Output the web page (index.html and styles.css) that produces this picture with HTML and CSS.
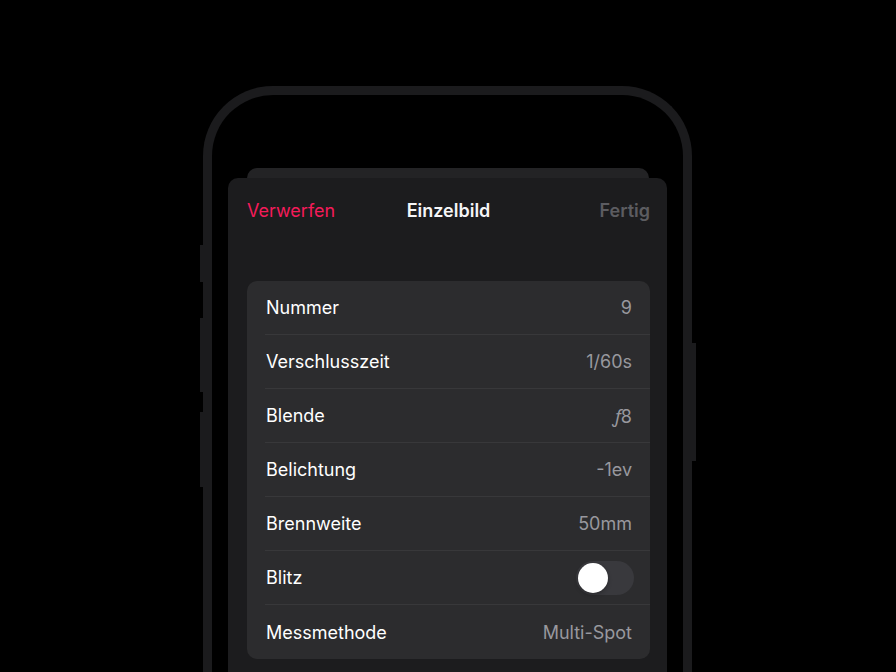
FILE: index.html
```html
<!DOCTYPE html>
<html lang="de">
<head>
<meta charset="utf-8">
<title>Einzelbild</title>
<link rel="stylesheet" href="styles.css">
</head>
<body>
<div class="phone">
  <span class="btn btn-l1"></span>
  <span class="btn btn-l2"></span>
  <span class="btn btn-l3"></span>
  <span class="btn btn-r1"></span>
  <div class="screen">
    <div class="sheet-back"></div>
    <div class="sheet">
      <div class="nav">
        <span class="nav-cancel">Verwerfen</span>
        <span class="nav-title">Einzelbild</span>
        <span class="nav-done">Fertig</span>
      </div>
      <div class="list">
        <div class="row"><span class="label">Nummer</span><span class="value">9</span></div>
        <div class="row"><span class="label">Verschlusszeit</span><span class="value">1/60s</span></div>
        <div class="row"><span class="label">Blende</span><span class="value"><span class="fnum">ƒ</span>8</span></div>
        <div class="row"><span class="label">Belichtung</span><span class="value">-1ev</span></div>
        <div class="row"><span class="label">Brennweite</span><span class="value">50mm</span></div>
        <div class="row"><span class="label">Blitz</span><span class="toggle"><span class="knob"></span></span></div>
        <div class="row"><span class="label">Messmethode</span><span class="value">Multi-Spot</span></div>
      </div>
    </div>
  </div>
</div>
</body>
</html>
```

FILE: styles.css
```css
html, body {
  margin: 0;
  padding: 0;
  background: #000;
  height: 672px;
  overflow: hidden;
}
body {
  font-family: Inter, "Noto Sans", sans-serif;
  -webkit-font-smoothing: antialiased;
}
.phone {
  position: relative;
  margin: 86px 0 0 203px;
  width: 471px;
  height: 577px;
  border: 9px solid #1b1b1d;
  border-bottom: none;
  border-radius: 70px 70px 0 0;
}
.btn {
  position: absolute;
  width: 3px;
  background: #1b1b1d;
}
.btn-l1 { left: -12px; top: 150px; height: 37px; }
.btn-l2 { left: -12px; top: 223px; height: 74px; }
.btn-l3 { left: -12px; top: 317px; height: 75px; }
.btn-r1 { right: -13px; top: 248px; height: 118px; width: 4px; }
.screen {
  display: flex;
  flex-direction: column;
  height: 100%;
  border-radius: 61px 61px 0 0;
  overflow: hidden;
}
.sheet-back {
  height: 20px;
  margin: 73px 34px -10px 35px;
  background: #232325;
  border-radius: 10px 10px 0 0;
  flex-shrink: 0;
}
.sheet {
  position: relative;
  flex: 1;
  margin: 0 16px;
  padding: 0 17px 0 19px;
  background: #1c1c1e;
  border-radius: 10px 10px 0 0;
}
.nav {
  display: grid;
  grid-template-columns: 1fr auto 1fr;
  align-items: center;
  height: 64px;
  font-size: 18px;
  margin-bottom: 39px;
}
.nav-cancel { color: #f51b5a; justify-self: start; }
.nav-title { color: #f5f5f7; font-weight: 600; }
.nav-done { color: #5c5c61; justify-self: end; font-weight: 600; }
.list {
  background: #2c2c2e;
  border-radius: 10px;
  padding-left: 18px;
}
.row {
  display: flex;
  align-items: center;
  justify-content: space-between;
  height: 54px;
  padding-right: 18px;
  border-bottom: 1px solid #38383a;
  box-sizing: border-box;
  font-size: 18px;
}
.row:last-child { border-bottom: none; }
.label { color: #fff; padding-left: 1px; }
.value { color: #98989e; }
.fnum { font-family: "Noto Sans", "DejaVu Sans", sans-serif; font-style: italic; }
.toggle {
  display: flex;
  align-items: center;
  width: 58px;
  height: 34px;
  margin-right: -2px;
  border-radius: 17px;
  background: #39393d;
  padding: 0 2px;
  box-sizing: border-box;
}
.knob {
  width: 30px;
  height: 30px;
  border-radius: 50%;
  background: #fff;
  box-shadow: 0 2px 4px rgba(0,0,0,0.25);
}
```
